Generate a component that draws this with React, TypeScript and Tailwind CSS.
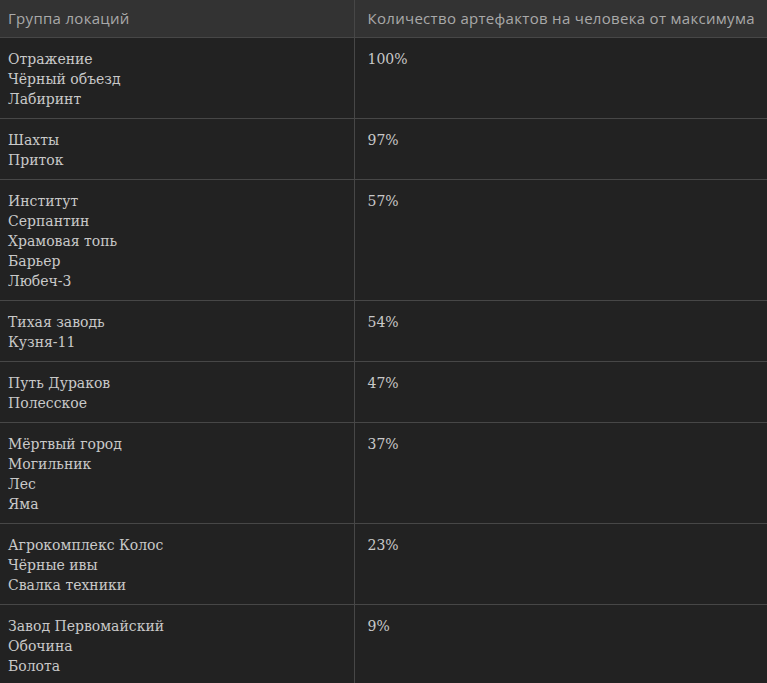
const rows: { places: string[]; value: string }[] = [
  { places: ["Отражение", "Чёрный объезд", "Лабиринт"], value: "100%" },
  { places: ["Шахты", "Приток"], value: "97%" },
  { places: ["Институт", "Серпантин", "Храмовая топь", "Барьер", "Любеч-3"], value: "57%" },
  { places: ["Тихая заводь", "Кузня-11"], value: "54%" },
  { places: ["Путь Дураков", "Полесское"], value: "47%" },
  { places: ["Мёртвый город", "Могильник", "Лес", "Яма"], value: "37%" },
  { places: ["Агрокомплекс Колос", "Чёрные ивы", "Свалка техники"], value: "23%" },
  { places: ["Завод Первомайский", "Обочина", "Болота"], value: "9%" },
];

export default function App() {
  return (
    <div className="min-h-screen w-full bg-[#222222]">
      <table className="w-full border-collapse">
        <thead>
          <tr className="bg-[#333333]">
            <th className="h-[37px] w-[354px] border-r border-[#474747] pl-2 text-left align-middle font-['Open_Sans',sans-serif] text-[15px] font-normal tracking-[0.3px] text-[#a9a9a9]">
              Группа локаций
            </th>
            <th className="h-[37px] pl-[13px] text-left align-middle font-['Open_Sans',sans-serif] text-[15px] font-normal tracking-[0.3px] text-[#a9a9a9]">
              Количество артефактов на человека от максимума
            </th>
          </tr>
        </thead>
        <tbody>
          {rows.map((row, i) => (
            <tr key={i} className="border-t border-[#474747]">
              <td className="border-r border-[#474747] pb-[9px] pl-2 pt-[11px] align-top font-['DejaVu_Serif',serif] text-[14px] leading-[20px] text-[#c9c9c9]">
                {row.places.map((p) => (
                  <div key={p}>{p}</div>
                ))}
              </td>
              <td className="pb-[9px] pl-[13px] pt-[11px] align-top font-['DejaVu_Serif',serif] text-[14px] leading-[20px] text-[#c9c9c9]">
                {row.value}
              </td>
            </tr>
          ))}
        </tbody>
      </table>
    </div>
  );
}
